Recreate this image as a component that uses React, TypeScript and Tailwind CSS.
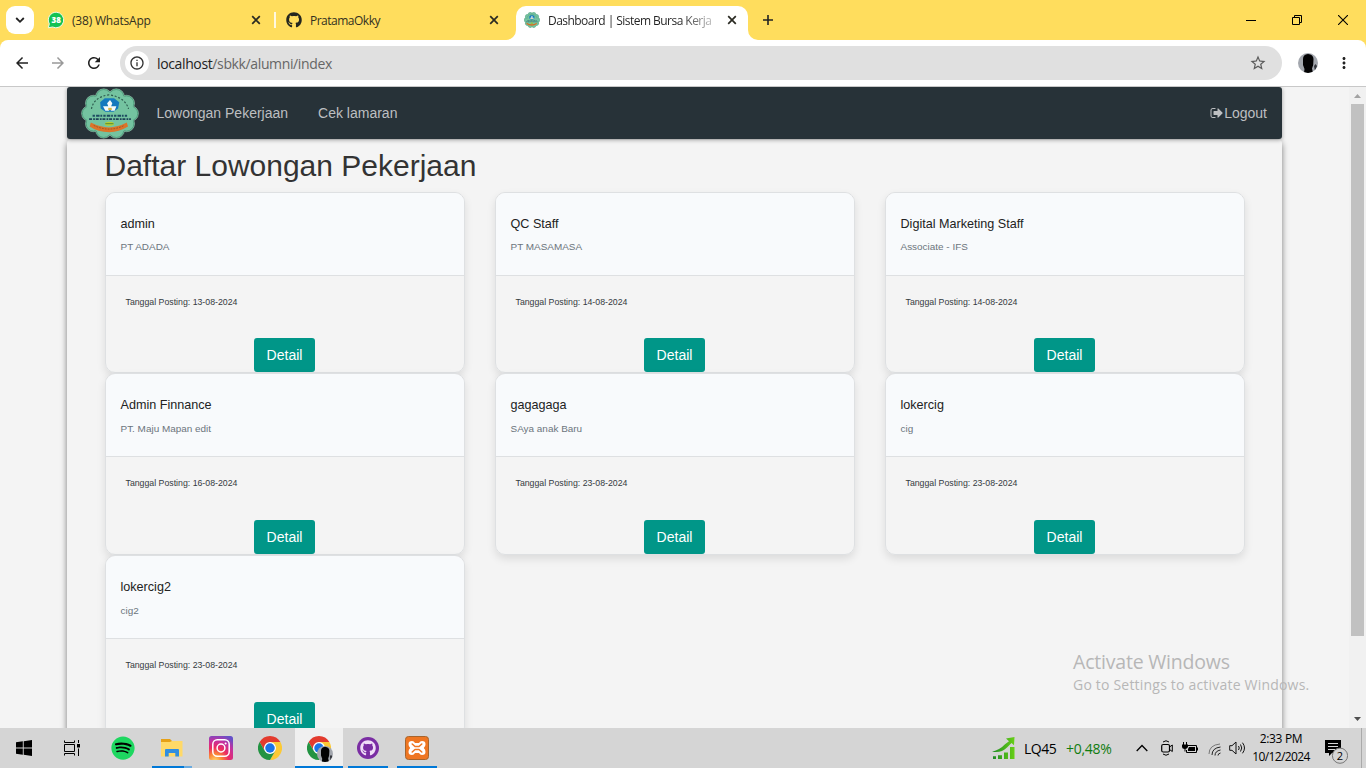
import React from "react";
import { FaGithub, FaSpotify } from "react-icons/fa";
import { MdArrowBack, MdArrowForward, MdRefresh, MdStarBorder, MdInfoOutline, MdMoreVert } from "react-icons/md";

const jobs = [
  { title: "admin", company: "PT ADADA", date: "13-08-2024" },
  { title: "QC Staff", company: "PT MASAMASA", date: "14-08-2024" },
  { title: "Digital Marketing Staff", company: "Associate - IFS", date: "14-08-2024" },
  { title: "Admin Finnance", company: "PT. Maju Mapan edit", date: "16-08-2024" },
  { title: "gagagaga", company: "SAya anak Baru", date: "23-08-2024" },
  { title: "lokercig", company: "cig", date: "23-08-2024" },
  { title: "lokercig2", company: "cig2", date: "23-08-2024" },
];

function SchoolLogo({ className }: { className: string }) {
  const petals = Array.from({ length: 10 }, (_, i) => {
    const a = ((i * 36 + 18) * Math.PI) / 180;
    return { x: 50 + Math.sin(a) * 35, y: 45 - Math.cos(a) * 31 };
  });
  return (
    <svg className={className} viewBox="0 0 100 90" preserveAspectRatio="none">
      {petals.map((p, i) => (
        <circle key={i} cx={p.x} cy={p.y} r="14" fill="#6fbf9b" stroke="#9dbcae" strokeWidth="1" />
      ))}
      {petals.map((p, i) => (
        <circle key={i} cx={p.x} cy={p.y} r="12.8" fill="#74c3a0" stroke="#4c9a79" strokeWidth="1.5" />
      ))}
      <ellipse cx="50" cy="45" rx="42" ry="37" fill="#74c3a0" />
      <path d="M18 37 Q22 16 48 12 Q76 16 82 37" fill="none" stroke="#2c5a4e" strokeWidth="2" strokeDasharray="3.5 3" />
      <path d="M33 25 L41 18 H57 L66 25 L64 36 L56 42 H42 L34 36Z" fill="#1479bd" />
      <path d="M50 21 L54 27 L52 32 H61 L58 40 H52 L50 37 L48 40 H42 L38 32 H47 L45 27Z" fill="#f5faf8" />
      <path d="M47 35 h6 v4 h-6z" fill="#d9b742" />
      <path d="M20 49 H80" stroke="#1d4b60" strokeWidth="3.4" strokeDasharray="4 2 6 1.5 3 2" />
      <path d="M14 55 H86" stroke="#1d4257" strokeWidth="3" strokeDasharray="5 2 3 1.5" />
      <ellipse cx="49" cy="63" rx="8" ry="3.6" fill="#b3cf36" />
      <path d="M42 63 h14" stroke="#38712e" strokeWidth="1.3" />
      <path d="M17 61 Q48 78 79 61 L81 68 Q65 78 49 78 Q29 78 15 68Z" fill="#dc7429" />
      <path d="M22 66 Q48 79 75 66" fill="none" stroke="#8d5126" strokeWidth="1.5" strokeDasharray="3 2" />
    </svg>
  );
}

function ChromeLogo() {
  return (
    <svg className="size-6" viewBox="0 0 48 48">
      <circle cx="24" cy="24" r="12" fill="#fff" />
      <path fill="#e33b2e" d="M24,12H44.7812a23.9939,23.9939,0,0,0-41.5639.0029L13.6079,30l.0093-.0024A11.9852,11.9852,0,0,1,24,12Z" />
      <path fill="#fcc934" d="M34.3913,30.0029,24.0007,48A23.994,23.994,0,0,0,44.78,12.0031H23.9989l-.0025.0093A11.985,11.985,0,0,1,34.3913,30.0029Z" />
      <path fill="#229342" d="M13.6086,30.0031,3.218,12.006A23.994,23.994,0,0,0,24.0025,48L34.3931,30.0029l-.0067-.0068a11.9852,11.9852,0,0,1-20.7778.007Z" />
      <circle cx="24" cy="24" r="9.5" fill="#1a73e8" />
    </svg>
  );
}

function Avatar({ className }: { className: string }) {
  return (
    <svg className={className + " overflow-hidden rounded-full"} viewBox="0 0 20 20">
      <rect width="20" height="20" fill="#a3a7ae" />
      <path d="M5 6 Q5 1.5 10 1 Q15.3 1.5 15.5 6 L15.2 12 L14 15.5 L15 20 H6 L6.5 16 L5 12Z" fill="#020203" />
      <path d="M16 13 l1.5 -2 l1.5 2 l-2 5z" fill="#33363c" />
    </svg>
  );
}

function TabClose() {
  return (
    <svg className="size-[10px]" viewBox="0 0 10 10">
      <path d="M1.2 1.2 L8.8 8.8 M8.8 1.2 L1.2 8.8" stroke="#2a2a22" strokeWidth="1.7" />
    </svg>
  );
}

function TabStrip() {
  return (
    <div className="flex h-10 shrink-0 items-center bg-[#ffdd5d] text-[12px] text-[#33301f]">
      <div className="ml-1.5 flex size-7 items-center justify-center rounded-[9px] bg-white">
        <svg className="size-[10px]" viewBox="0 0 10 10"><path d="M1.2 3 L5 6.8 L8.8 3" fill="none" stroke="#222" strokeWidth="1.8" /></svg>
      </div>
      <div className="ml-3 flex w-[228px] items-center">
        <svg className="size-5" viewBox="0 0 20 20">
          <path d="M10.2 2.2 A7.8 7.8 0 1 1 6.5 17 L2.3 17.8 L3.3 13.8 A7.8 7.8 0 0 1 10.2 2.2Z" fill="#12c254" stroke="#f0fbe8" strokeWidth="1" />
          <text x="10.2" y="12.9" textAnchor="middle" fontSize="8" fontWeight="800" fill="#fff" fontFamily="Open Sans, sans-serif">38</text>
        </svg>
        <span className="mt-px ml-1.5 grow whitespace-nowrap tracking-[-0.2px]">(38) WhatsApp</span>
        <span className="mr-[13px]"><TabClose /></span>
      </div>
      <div className="h-4 w-[2px] bg-[#fff8df]" />
      <div className="ml-2.5 flex w-[230px] items-center">
        <FaGithub className="size-4 text-[#24261f]" />
        <span className="mt-px ml-2 grow whitespace-nowrap tracking-[-0.5px]">PratamaOkky</span>
        <span className="mr-[17px]"><TabClose /></span>
      </div>
      <div className="relative flex h-[34px] w-[232px] items-center self-end rounded-t-[10px] bg-white">
        <svg className="absolute bottom-0 -left-[10px] size-[10px]" viewBox="0 0 10 10"><path d="M10 0 V10 H0 A10 10 0 0 0 10 0" fill="#fff" /></svg>
        <svg className="absolute -right-[10px] bottom-0 size-[10px]" viewBox="0 0 10 10"><path d="M0 0 V10 H10 A10 10 0 0 1 0 0" fill="#fff" /></svg>
        <SchoolLogo className="mb-1.5 ml-2 h-4 w-4" />
        <span className="mb-1 ml-2 w-[165px] bg-gradient-to-r from-[#222] from-80% to-[#22222244] bg-clip-text tracking-[-0.54px] whitespace-nowrap text-transparent">Dashboard | Sistem Bursa Kerja</span>
        <span className="mb-1.5 ml-[14px]"><TabClose /></span>
      </div>
      <svg className="ml-[15px] size-[10px]" viewBox="0 0 10 10"><path d="M5 0 V10 M0 5 H10" stroke="#222" strokeWidth="1.6" /></svg>
      <div className="ml-auto flex items-center">
        <svg className="mr-9 size-[10px]" viewBox="0 0 10 10"><path d="M0 5.5 H10" stroke="#000" /></svg>
        <svg className="mr-9 size-[10px]" viewBox="0 0 10 10"><path d="M.5 2.5 H7.5 V9.5 H.5Z M2.5 2.5 V.5 H9.5 V7.5 H7.5" fill="none" stroke="#000" /></svg>
        <svg className="mr-[18px] size-[10px]" viewBox="0 0 10 10"><path d="M0 0 L10 10 M10 0 L0 10" stroke="#000" strokeWidth="1.1" /></svg>
      </div>
    </div>
  );
}

function Toolbar() {
  return (
    <div className="shrink-0 bg-[#ffdd5d]">
      <div className="flex h-[46px] items-center rounded-t-[8px] bg-white">
        <MdArrowBack className="ml-[13px] size-[18px] text-[#222]" />
        <MdArrowForward className="ml-[18px] size-[18px] text-[#999]" />
        <MdRefresh className="ml-[18px] size-[18px] text-[#1f1f1f]" />
        <div className="ml-[17px] flex h-[34px] w-[1162px] items-center rounded-full bg-[#e0e0e0]">
          <div className="ml-[5px] flex size-6 items-center justify-center rounded-full bg-white">
            <MdInfoOutline className="size-4 text-[#333]" />
          </div>
          <span className="ml-2 text-[14px] tracking-[-0.37px] text-[#666]"><span className="text-[#222]">localhost</span>/sbkk/alumni/index</span>
          <MdStarBorder className="mr-[15px] ml-auto size-[18px] text-[#5b5b5b]" />
        </div>
        <Avatar className="ml-4 size-5" />
        <MdMoreVert className="ml-[17px] size-[18px] text-[#222]" />
      </div>
    </div>
  );
}

function NavBar() {
  return (
    <nav className="relative flex h-[52px] shrink-0 items-center rounded-[3px] bg-[#273238] text-[14px] text-[#bdbfc1] shadow-[0_1px_4px_rgba(0,0,0,0.35)]">
      <SchoolLogo className="ml-3.5 h-[51px] w-[58px]" />
      <a className="ml-[17.5px]">Lowongan Pekerjaan</a>
      <a className="ml-[30px]">Cek lamaran</a>
      <a className="mr-[15px] ml-auto flex items-center">
        <svg className="h-[14px] w-[14px]" viewBox="0 0 1664 1792" fill="currentColor">
          <path d="M640 1440q0 4 1 20t.5 26.5-3 23.5-10 19.5-20.5 6.5h-320q-119 0-203.5-84.5t-84.5-203.5v-704q0-119 84.5-203.5t203.5-84.5h320q13 0 22.5 9.5t9.5 22.5q0 4 1 20t.5 26.5-3 23.5-10 19.5-20.5 6.5h-320q-66 0-113 47t-47 113v704q0 66 47 113t113 47h312l11.5 1 11.5 3 8 5.5 7 9 2 13.5zm928-544q0 26-19 45l-544 544q-19 19-45 19t-45-19-19-45v-288h-448q-26 0-45-19t-19-45v-384q0-26 19-45t45-19h448v-288q0-26 19-45t45-19 45 19l544 544q19 19 19 45z" />
        </svg>
        Logout
      </a>
    </nav>
  );
}

function JobCard({ title, company, date }: { title: string; company: string; date: string }) {
  return (
    <article className="flex h-[181.8px] flex-col overflow-hidden rounded-[10px] border border-[#dee0e2] shadow-[0_4px_8px_rgba(0,0,0,0.1)]">
      <header className="h-[83px] shrink-0 border-b border-[#dee0e2] bg-[#f8fafc] px-[14.5px] pt-[22px]">
        <h2 className="text-[12.6px] leading-[18px] text-[#222]">{title}</h2>
        <p className="mt-[5.5px] text-[9.95px] leading-[18px] text-[#6c757d]">{company}</p>
      </header>
      <div className="flex grow flex-col items-center justify-between">
        <p className="mt-[17px] self-start pl-[19.5px] text-[8.75px] leading-[18px] text-[#343a40]">Tanggal Posting: {date}</p>
        <button className="mr-px h-[34px] w-[61px] rounded-[3px] bg-[#009688] pt-px text-[14px] text-white">Detail</button>
      </div>
    </article>
  );
}

function Scrollbar() {
  return (
    <div className="flex w-[17px] shrink-0 flex-col items-center bg-[#f1f1f1]">
      <svg className="h-[17px] w-[17px]" viewBox="0 0 17 17"><path d="M5 11 L8.5 7 L12 11Z" fill="#a3a3a3" /></svg>
      <div className="h-[532px] w-[13px] bg-[#c1c1c1]" />
      <svg className="mt-auto h-[17px] w-[17px]" viewBox="0 0 17 17"><path d="M5 6 L8.5 10 L12 6Z" fill="#505050" /></svg>
    </div>
  );
}

function TaskItem({ children, bar }: { children: React.ReactNode; bar?: string }) {
  return (
    <div className="relative flex h-10 w-[49px] items-center justify-center">
      {children}
      {bar && <div className={"absolute bottom-0 h-0.5 bg-[#0078d7] " + bar} />}
    </div>
  );
}

function Taskbar() {
  return (
    <footer className="flex h-10 shrink-0 items-center bg-[#d5d5d5] text-black">
      <div className="flex w-12 justify-center">
        <svg className="size-4" viewBox="0 0 16 16"><path d="M0 2.3 L6.8 1.3 V7.6 H0Z M7.7 1.2 L16 0 V7.6 H7.7Z M0 8.4 H6.8 V14.7 L0 13.7Z M7.7 8.4 H16 V16 L7.7 14.8Z" /></svg>
      </div>
      <div className="mr-[3px] flex w-[47px] justify-center">
        <svg className="size-4" viewBox="0 0 16 16"><path d="M.5 .5 V2.5 H10.5 V.5 M.5 4.5 H10.5 V11.5 H.5Z M.5 15.5 V13.5 H10.5 V15.5 M14.5 0 V3 M14.5 8.5 V16" fill="none" stroke="#000" /><path d="M13 4 h3 v3.5 H13z" /></svg>
      </div>
      <TaskItem>
        <div className="flex size-5 items-center justify-center rounded-full bg-black"><FaSpotify className="size-6 shrink-0 text-[#1ed760]" /></div>
      </TaskItem>
      <TaskItem bar="left-[5px] w-8">
        <svg className="size-6" viewBox="0 0 24 24">
          <path d="M1 3 H10 L12 5 H22 V20 H1Z" fill="#e6a117" />
          <path d="M1 6 H10 L12 5 H22.5 V20.5 H1Z" fill="#ffd968" />
          <path d="M5 20.5 V14 Q5 13 6 13 H18 Q19 13 19 14 V20.5 H15.3 V17 H8.7 V20.5Z" fill="#318ee0" />
        </svg>
        <div className="absolute bottom-0 left-[37px] h-0.5 w-2 bg-[#6aabe0]" />
      </TaskItem>
      <TaskItem>
        <svg className="size-6" viewBox="0 0 24 24">
          <defs>
            <radialGradient id="ig" cx="0.25" cy="1.05" r="1.15">
              <stop offset="0" stopColor="#ffdc70" /><stop offset=".25" stopColor="#fb8a35" /><stop offset=".5" stopColor="#ec2c62" /><stop offset=".75" stopColor="#c431a0" /><stop offset="1" stopColor="#6550c8" />
            </radialGradient>
          </defs>
          <rect width="24" height="24" rx="2.5" fill="url(#ig)" />
          <rect x="3.8" y="3.8" width="16.4" height="16.4" rx="4.5" fill="none" stroke="#fff" strokeWidth="1.5" />
          <circle cx="12" cy="12" r="3.9" fill="none" stroke="#fff" strokeWidth="1.5" />
          <circle cx="16.6" cy="7.5" r="1" fill="#fff" />
        </svg>
      </TaskItem>
      <TaskItem><ChromeLogo /></TaskItem>
      <TaskItem bar="left-px w-12">
        <div className="absolute top-0 bottom-0.5 left-px w-12 bg-[#f0f0f0]" />
        <div className="relative"><ChromeLogo /><Avatar className="absolute -right-0.5 -bottom-0.5 size-4" /></div>
      </TaskItem>
      <TaskItem bar="left-[5px] w-10">
        <div className="flex size-[22px] items-center justify-center rounded-full bg-[#7a2da3]"><FaGithub className="size-4 text-[#f0def7]" /></div>
      </TaskItem>
      <TaskItem bar="left-[5px] w-10">
        <svg className="size-6" viewBox="0 0 24 24">
          <rect x=".5" y=".5" width="23" height="23" rx="3" fill="#ef7622" stroke="#a7642c" />
          <path d="M7 5 Q9 5 10 7 H14 Q15 5 17 5 Q20.5 5 20.5 8.3 Q20.5 10.5 18.8 12 Q20.5 13.5 20.5 15.7 Q20.5 19 17 19 Q15 19 14 17 H10 Q9 19 7 19 Q3.5 19 3.5 15.7 Q3.5 13.5 5.2 12 Q3.5 10.5 3.5 8.3 Q3.5 5 7 5Z" fill="#fff" />
          <path d="M7.2 8 L10 10.5 H14 L16.8 8 M7.2 16 L10 13.5 H14 L16.8 16" fill="none" stroke="#ef7622" strokeWidth="1.5" strokeLinecap="round" strokeLinejoin="round" />
        </svg>
      </TaskItem>

      <div className="ml-auto flex h-full items-center">
        <svg className="h-[22px] w-6" viewBox="0 0 24 24" preserveAspectRatio="none">
          <defs><linearGradient id="grow" x1="0" x2="1"><stop offset="0" stopColor="#1e8b26" /><stop offset="1" stopColor="#67cf16" /></linearGradient></defs>
          <path d="M0 16 Q8 14 13 8 L17 4.5 L14 1.5 L22.5 0 L22 9 L19.5 6.5 L15 11.5 Q9 18 0 16Z" fill="url(#grow)" />
          <path d="M1 21 h3 v3 h-3z M6 20 h4 v4 h-4z M12 17 h4 v7 h-4z M18 11 h4.5 v13 h-4.5z" fill="url(#grow)" />
        </svg>
        <span className="ml-2 w-[42px] text-[14px] tracking-[-0.5px]">LQ45</span>
        <span className="w-[48px] text-[14px] tracking-[-0.3px] text-[#107c10]">+0,48%</span>
        <svg className="ml-[22px] h-2 w-3" viewBox="0 0 12 8"><path d="M.7 7 L6 1.5 L11.3 7" fill="none" stroke="#000" strokeWidth="1.3" /></svg>
        <svg className="ml-[13px] h-4 w-3" viewBox="0 0 12 16" fill="none" stroke="#000"><path d="M2 2 Q5 -.5 8 2 M2 14 Q5 16.5 8 14" /><rect x=".7" y="4.5" width="7.8" height="7.5" rx="1.5" strokeWidth="1.2" /><path d="M8.5 7 L11.3 5 V11.5 L8.5 9.5" /></svg>
        <svg className="ml-[9px] h-3 w-4" viewBox="0 0 16 12"><path d="M1.5 0 V3 M4.5 0 V3 M3 6 V9.5 M6 3.5 H14.5 V10.5 H4.5 V8" fill="none" stroke="#000" /><path d="M0 2.5 h6 v2.5 Q5 7 3 7 Q0 7 0 4.5Z M7 5 h6 v4 H6V7z M14.5 5.5 h1.5 v3 h-1.5z" /></svg>
        <svg className="mt-0.5 ml-[10px] size-[14px]" viewBox="0 0 14 14" fill="none" stroke="#222"><path d="M1 12 Q1 3 12 2" stroke="#777" /><path d="M4 13 Q4 6 12.5 5 M7 13.5 Q7 9 12.5 8 M10 13.5 Q10 11.5 12.5 11" /></svg>
        <svg className="ml-[7px] h-[14px] w-[17px]" viewBox="0 0 17 14" fill="none" stroke="#111"><path d="M.7 4.7 H3 L7 1 V13 L3 9.3 H.7Z M9.5 5 Q11 7 9.5 9 M11.5 3.5 Q14 7 11.5 10.5 M13.5 1.7 Q17.5 7 13.5 12.3" /></svg>
        <div className="ml-[5px] flex w-[60px] flex-col items-center text-[12px] leading-[18px] whitespace-nowrap">
          <span className="tracking-[-0.35px]">2:33 PM</span>
          <span className="tracking-[-0.6px]">10/12/2024</span>
        </div>
        <svg className="mt-2 ml-[13px] size-6" viewBox="0 0 24 24">
          <path d="M1 0 H17 V13 H8 L5 16 V13 H1Z" /><path d="M4 3.5 H14 M4 6.5 H14 M4 9.5 H11" stroke="#d5d5d5" />
          <circle cx="16" cy="15.7" r="7.6" fill="#d5d5d5" stroke="#777" />
          <text x="16" y="19.7" textAnchor="middle" fontSize="11" fontFamily="Open Sans, sans-serif">2</text>
        </svg>
        <div className="ml-[13px] h-full w-px bg-[#aaa]" />
        <div className="w-1" />
      </div>
    </footer>
  );
}

export default function App() {
  return (
    <div className="flex h-[768px] w-[1366px] flex-col overflow-hidden bg-white font-['Open_Sans',sans-serif]">
      <TabStrip />
      <Toolbar />
      <div className="relative flex min-h-0 grow border-t border-[#c8c8c8] bg-[#f4f4f4]">
        <main className="flex min-w-0 grow flex-col overflow-hidden pr-[67px] pl-[67px] font-['Liberation_Sans',Arial,sans-serif]">
          <NavBar />
          <section className="mt-px h-[700px] shrink-0 rounded-[3px] bg-[#f4f4f4] px-[38px] shadow-[0_3px_6px_rgba(0,0,0,0.5)]">
            <h1 className="-ml-[0.5px] pt-[9px] text-[30px] leading-[34px] text-[#333]">Daftar Lowongan Pekerjaan</h1>
            <div className="mt-[8.6px] grid grid-cols-[360px_360px_360px] gap-x-[30px]">
              {jobs.map((job) => <JobCard key={job.title} {...job} />)}
            </div>
          </section>
        </main>
        <Scrollbar />
        <div className="absolute top-[561px] left-[1073px] whitespace-nowrap text-[#b7b7b7]">
          <div className="text-[19.5px] leading-[27px] tracking-[-0.2px]">Activate Windows</div>
          <div className="pt-px text-[14px] leading-[18px] tracking-[0.2px]">Go to Settings to activate Windows.</div>
        </div>
      </div>
      <Taskbar />
    </div>
  );
}
